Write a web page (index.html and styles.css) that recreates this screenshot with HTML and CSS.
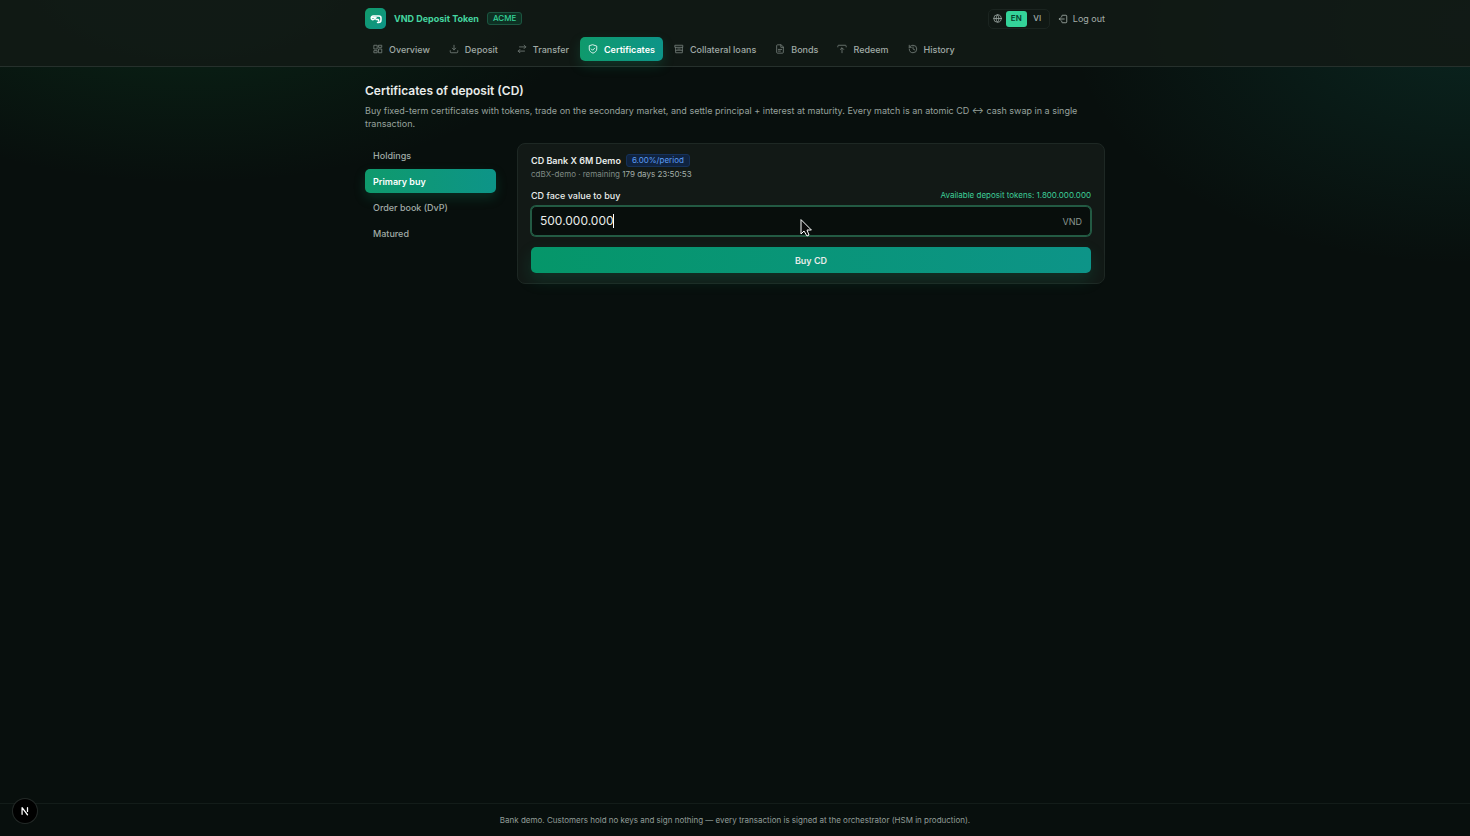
FILE: index.html
```html
<!DOCTYPE html>
<html lang="en">
<head>
    <meta charset="UTF-8">
    <meta name="viewport" content="width=device-width, initial-scale=1.0">
    <title>VND Deposit Token</title>
    <link rel="stylesheet" href="styles.css">
</head>
<body>

<header class="site-header">
    <div class="wrap">
        <div class="topbar">
            <a class="brand" href="#">
                <span class="logo">
                    <svg viewBox="0 0 24 24"><path d="M11 6H6a4 4 0 0 0-3 6c2 2 5 1 7-1l2-2"/><path d="M4 9h6"/><path d="M13 6h5a4 4 0 0 1 4 4v4a5 5 0 0 1-5 5h-2"/><path d="M12 13h4a2 2 0 0 1 1 3"/></svg>
                </span>
                <span class="brand-name">VND Deposit Token</span>
                <span class="tag">ACME</span>
            </a>
            <div class="account">
                <div class="lang">
                    <svg class="icon" viewBox="0 0 24 24"><circle cx="12" cy="12" r="10"/><path d="M2 12h20"/><path d="M12 2a15 15 0 0 1 0 20a15 15 0 0 1 0-20"/></svg>
                    <button class="lang-btn on" type="button">EN</button>
                    <button class="lang-btn" type="button">VI</button>
                </div>
                <button class="logout" type="button">
                    <svg class="icon" viewBox="0 0 24 24"><path d="M9 7V5a2 2 0 0 1 2-2h8a2 2 0 0 1 2 2v14a2 2 0 0 1-2 2h-8a2 2 0 0 1-2-2v-2"/><path d="M15 12H3"/><path d="m6 9-3 3 3 3"/></svg>
                    Log out
                </button>
            </div>
        </div>

        <nav class="nav">
            <a href="#">
                <svg class="icon" viewBox="0 0 24 24"><path d="M3 3h7v9H3z"/><path d="M14 3h7v5h-7z"/><path d="M14 12h7v9h-7z"/><path d="M3 16h7v5H3z"/></svg>
                Overview
            </a>
            <a href="#">
                <svg class="icon" viewBox="0 0 24 24"><path d="M12 3v11"/><path d="m8 10 4 4 4-4"/><path d="M3 16v3a2 2 0 0 0 2 2h14a2 2 0 0 0 2-2v-3"/></svg>
                Deposit
            </a>
            <a href="#">
                <svg class="icon" viewBox="0 0 24 24"><path d="m17 3 4 4-4 4"/><path d="M21 7H6"/><path d="m7 21-4-4 4-4"/><path d="M3 17h15"/></svg>
                Transfer
            </a>
            <a class="active" href="#">
                <svg class="icon" viewBox="0 0 24 24"><path d="M12 2 21 5v7c0 5-4 8-9 10-5-2-9-5-9-10V5z"/><path d="m8 12 3 3 5-5"/></svg>
                Certificates
            </a>
            <a href="#">
                <svg class="icon" viewBox="0 0 24 24"><path d="M3 3h18v5H3z"/><path d="M4 8v13h16V8"/><path d="M4 15h16"/><path d="M9 12h6"/></svg>
                Collateral loans
            </a>
            <a href="#">
                <svg class="icon" viewBox="0 0 24 24"><path d="M14 2H6a2 2 0 0 0-2 2v16a2 2 0 0 0 2 2h12a2 2 0 0 0 2-2V8z"/><path d="M14 2v6h6"/><path d="M8 13h8"/><path d="M8 17h5"/></svg>
                Bonds
            </a>
            <a href="#">
                <svg class="icon" viewBox="0 0 24 24"><path d="M2 7V5a2 2 0 0 1 2-2h16a2 2 0 0 1 2 2v2"/><path d="M12 21V10"/><path d="m8 13 4-4 4 4"/></svg>
                Redeem
            </a>
            <a href="#">
                <svg class="icon" viewBox="0 0 24 24"><path d="M3 12a9 9 0 1 0 9-9 10 10 0 0 0-7 3L3 8"/><path d="M3 3v5h5"/><path d="M12 7v5l4 2"/></svg>
                History
            </a>
        </nav>
    </div>
</header>

<main class="wrap">
    <h1>Certificates of deposit (CD)</h1>
    <p class="intro">Buy fixed-term certificates with tokens, trade on the secondary market, and settle principal + interest at maturity. Every match is an atomic CD ↔ cash swap in a single transaction.</p>

    <div class="layout">
        <aside class="side">
            <a href="#">Holdings</a>
            <a class="active" href="#">Primary buy</a>
            <a href="#">Order book (DvP)</a>
            <a href="#">Matured</a>
        </aside>

        <form class="card">
            <div class="card-title">
                <h2>CD Bank X 6M Demo</h2>
                <span class="rate">6.00%/period</span>
            </div>
            <p class="meta">cdBX-demo · remaining <span>179 days 23:50:53</span></p>

            <div class="field-head">
                <label for="amount">CD face value to buy</label>
                <span class="available">Available deposit tokens: 1.800.000.000</span>
            </div>
            <div class="field">
                <input id="amount" type="text" inputmode="numeric" value="500.000.000">
                <span class="unit">VND</span>
                <i class="caret"></i>
                <svg class="pointer" viewBox="0 0 12 18"><path d="M1 1v14l3-3 3 5 2-1-2-5h4z"/></svg>
            </div>
            <button class="buy" type="button">Buy CD</button>
        </form>
    </div>
</main>

<footer class="site-footer">Bank demo. Customers hold no keys and sign nothing — every transaction is signed at the orchestrator (HSM in production).</footer>

<button class="dev-badge" type="button" aria-label="Open dev tools">
    <svg viewBox="0 0 24 24"><path d="M5 20V4l13 17"/><path d="M18 4v9"/></svg>
</button>

</body>
</html>
```
FILE: styles.css
```css
* {
    box-sizing: border-box;
}
body {
    margin: 0;
    min-height: 100vh;
    display: flex;
    flex-direction: column;
    font-family: Inter, "Liberation Sans", sans-serif;
    font-size: 9px;
    line-height: 13px;
    color: #e8ecea;
    background-color: #080f0d;
    background-image:
        radial-gradient(400px 200px at 13% -2%, rgba(16, 120, 60, 0.22), transparent),
        radial-gradient(400px 240px at 100% 3%, rgba(20, 150, 125, 0.16), transparent);
    background-repeat: no-repeat;
}
a {
    color: inherit;
    text-decoration: none;
}
button, input {
    font: inherit;
    color: inherit;
    border: 0;
    background: none;
    padding: 0;
    margin: 0;
}
button {
    cursor: pointer;
}
svg {
    fill: none;
    stroke: currentColor;
    stroke-width: 2;
    stroke-linecap: round;
    stroke-linejoin: round;
}
.icon {
    width: 10px;
    height: 10px;
    flex: none;
}
.wrap {
    width: 100%;
    max-width: 760px;
    margin: 0 auto;
    padding: 0 10px;
}

/* Header */
.site-header {
    background-color: rgba(18, 25, 21, 0.9);
    border-bottom: 1px solid #26302c;
}
.topbar {
    display: flex;
    align-items: center;
    justify-content: space-between;
    height: 37px;
}
.brand, .account, .lang, .logout {
    display: flex;
    align-items: center;
}
.brand {
    gap: 8px;
}
.logo {
    display: flex;
    align-items: center;
    justify-content: center;
    width: 21px;
    height: 21px;
    border-radius: 5px;
    color: white;
    background: linear-gradient(135deg, #129a6a, #0d9488);
}
.logo svg {
    width: 12px;
    height: 12px;
    stroke-width: 3;
}
.brand-name {
    font-size: 9px;
    font-weight: 700;
    color: #45d6a0;
}
.tag {
    padding: 0 5px;
    border: 1px solid #1b5540;
    border-radius: 3px;
    font-size: 8px;
    line-height: 11px;
    font-weight: 500;
    color: #34d399;
    background-color: #0e3023;
}
.account {
    gap: 8px;
}
.lang {
    height: 20px;
    padding: 0 1px 0 4px;
    border: 1px solid #1b2420;
    border-radius: 5px;
    font-size: 8px;
    color: #a3aea9;
}
.lang .icon {
    margin-right: 4px;
    width: 9px;
    height: 9px;
}
.lang-btn {
    width: 21px;
    height: 16px;
    border-radius: 3px;
    font-weight: 500;
}
.lang-btn.on {
    color: #06402c;
    background-color: #34d399;
    font-weight: 600;
}
.logout {
    gap: 5px;
    color: #a3aea9;
}
.nav {
    display: flex;
    gap: 3px;
    padding-bottom: 5px;
}
.nav a, .side a {
    display: flex;
    align-items: center;
    gap: 6px;
    height: 24px;
    padding: 0 8px;
    border-radius: 5px;
    font-weight: 500;
    color: #a0aba6;
}
.nav .icon {
    opacity: 0.7;
}
.nav .active, .side .active {
    color: white;
    font-weight: 600;
    background: linear-gradient(90deg, #0f9a6c, #0d9488);
    box-shadow: 0 5px 12px rgba(16, 150, 105, 0.22);
}
.nav .active .icon {
    opacity: 1;
}

/* Content */
main {
    flex: 1;
}
h1, h2, p {
    margin: 0;
}
h1 {
    margin-top: 15px;
    font-size: 12px;
    line-height: 18px;
    font-weight: 600;
}
.intro {
    margin-top: 4px;
    color: #97a29d;
}
.layout {
    display: grid;
    grid-template-columns: 131px 1fr;
    gap: 21px;
    align-items: start;
    margin-top: 13px;
}
.side {
    display: flex;
    flex-direction: column;
    gap: 2px;
}
.card {
    padding: 10px 13px;
    border: 1px solid #1e2824;
    border-radius: 8px;
    background-color: #121916;
}
.card-title {
    display: flex;
    align-items: center;
    gap: 5px;
}
h2 {
    font-size: 9px;
    line-height: 13px;
    font-weight: 600;
}
.rate {
    padding: 0 5px;
    border: 1px solid #15315a;
    border-radius: 3px;
    font-size: 8px;
    line-height: 11px;
    color: #5b9df5;
    background-color: #10233f;
}
.meta {
    margin-top: 1px;
    font-size: 8px;
    color: #7f8a85;
}
.meta span {
    color: #a3aea9;
}
.field-head {
    display: flex;
    align-items: center;
    justify-content: space-between;
    margin-top: 8px;
}
.field-head label {
    font-weight: 500;
}
.available {
    font-size: 8px;
    color: #3ecf98;
}
.field {
    position: relative;
    display: flex;
    align-items: center;
    height: 30px;
    margin-top: 4px;
    padding: 0 8px;
    border: 1px solid #235a43;
    border-radius: 5px;
    background-color: #080e0c;
    box-shadow: 0 0 0 1px #235a43;
}
.field input {
    flex: 1;
    min-width: 0;
    outline: none;
    font-size: 12px;
    line-height: 18px;
    caret-color: transparent;
}
.unit {
    color: #8b9691;
}
.caret {
    position: absolute;
    left: 81px;
    top: 7px;
    width: 1px;
    height: 14px;
    background-color: white;
}
.pointer {
    position: absolute;
    left: 48%;
    top: 12px;
    width: 12px;
    height: 18px;
    fill: #0a0a0a;
    stroke: white;
    stroke-width: 1;
}
.buy {
    width: 100%;
    height: 26px;
    margin-top: 11px;
    border-radius: 5px;
    font-weight: 600;
    background: linear-gradient(90deg, #059669, #0d9488);
    box-shadow: 0 7px 16px rgba(16, 150, 105, 0.2);
}

/* Footer */
.site-footer {
    padding: 10px;
    border-top: 1px solid #131c19;
    text-align: center;
    font-size: 8px;
    line-height: 12px;
    color: #929d98;
}
.dev-badge {
    position: fixed;
    left: 13px;
    bottom: 13px;
    display: flex;
    align-items: center;
    justify-content: center;
    width: 24px;
    height: 24px;
    border-radius: 50%;
    color: white;
    background-color: black;
    box-shadow: 0 0 0 1px #232927;
}
.dev-badge svg {
    width: 10px;
    height: 10px;
    stroke-width: 3;
}
```
